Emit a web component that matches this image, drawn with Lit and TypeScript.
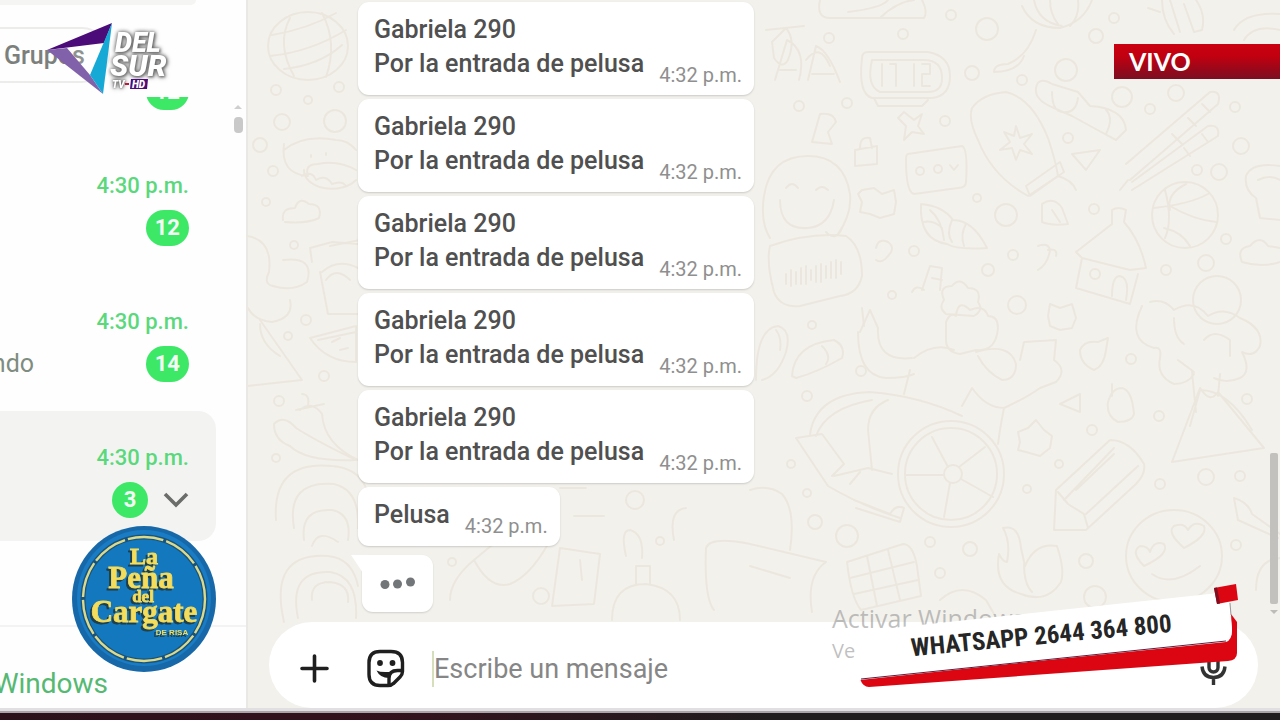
import { LitElement, html, css, svg, nothing } from "lit";
import { customElement, property } from "lit/decorators.js";

interface Message {
  lines: string[];
  time: string;
}

interface Chat {
  time: string;
  unread: number;
  preview?: string;
  selected?: boolean;
}

const MESSAGES: Message[] = [
  ...Array.from({ length: 5 }, () => ({
    lines: ["Gabriela 290", "Por la entrada de pelusa"],
    time: "4:32 p.m.",
  })),
  { lines: ["Pelusa"], time: "4:32 p.m." },
];

const CHATS: Chat[] = [
  { time: "4:30 p.m.", unread: 12 },
  { time: "4:30 p.m.", unread: 12 },
  { time: "4:30 p.m.", unread: 14, preview: "ndo" },
  { time: "4:30 p.m.", unread: 3, selected: true },
];

/* Small rings and dots scattered between the larger doodles. */
const RINGS: number[][] = [
  [276, 90, 5], [339, 87, 5], [308, 100, 4], [282, 122, 8], [260, 145, 7], [273, 171, 5], [266, 202, 4],
  [294, 245, 4], [306, 320, 5], [288, 336, 4], [324, 376, 5], [279, 401, 5], [276, 458, 4], [635, 500, 9],
  [660, 541, 4], [541, 596, 8], [452, 562, 4], [951, 15, 5], [987, 29, 11], [903, 34, 5], [829, 38, 5],
  [1114, 18, 5], [1096, 36, 7], [972, 73, 7], [1022, 80, 5], [1066, 70, 11], [1122, 97, 10], [1176, 93, 8],
  [799, 106, 5], [847, 103, 5], [945, 121, 5], [1068, 138, 5], [1150, 109, 5], [1235, 107, 5], [1241, 146, 8],
  [1197, 170, 5], [1219, 172, 8], [977, 198, 4], [1006, 215, 11], [1094, 209, 5], [914, 251, 5], [1013, 255, 5],
  [988, 270, 6], [1226, 239, 5], [1206, 263, 8], [892, 295, 4], [1166, 270, 5], [1017, 305, 9], [1217, 300, 24],
  [812, 325, 4], [861, 371, 5], [807, 396, 5], [1131, 359, 5], [1092, 430, 5], [1247, 399, 5], [1159, 416, 5],
  [791, 464, 4], [1059, 464, 4], [1027, 489, 4], [807, 493, 4], [1206, 477, 8], [1160, 484, 5], [1240, 476, 5],
  [815, 522, 7], [847, 536, 11], [930, 542, 5], [970, 549, 7], [1086, 561, 7], [1236, 545, 5], [940, 573, 5],
  [1095, 597, 11],
];

const DOODLES: string[] = [
  /* globe */
  "M268 46a40 34 0 1 0 80 0a40 34 0 1 0 -80 0M272 35q36 -6 64 -22M270 56q40 -4 76 -26M284 69q36 -4 58 -24M290 18q-14 26 4 58M322 13q16 30 4 64",
  /* baby with pacifier */
  "M284 150q20 -16 52 -10q12 0 20 10M284 144q-4 30 24 32q-4 -12 10 -12q20 -4 38 6M304 170a28 18 0 0 0 52 10M302 176q10 -6 14 4q10 -6 16 4q10 -4 14 2M324 121a11 11 0 1 1 22 0a11 11 0 1 1 -22 0M311 155v2M326 153v2",
  /* clouds at the left */
  "M283 220q-2 -12 12 -12q4 -12 14 -4q14 0 10 14q-12 6 -34 4M247 236q26 4 22 36q-6 12 4 14q20 6 34 -4q8 -26 -24 -22M290 300q4 18 -18 22q-18 -2 -24 -14M260 320l42 60l-54 6M260 324q0 20 20 32",
  /* drink */
  "M312 262l-2 -14l22 -6l26 2M320 272l8 42h30M322 272q16 -14 36 -4M330 246l30 -6M326 280q10 -14 24 0",
  /* watermelon */
  "M310 338l46 -12v36q-30 0 -46 -24zM318 340l38 -8M332 342l8 -4M340 350l8 -2",
  /* carrots */
  "M274 424q10 -10 22 4q22 14 60 32q-50 2 -66 -14q-16 -6 -16 -22zM300 410q12 -10 22 4q2 30 36 46M302 394q8 0 6 12M296 410l28 -6",
  /* spiral */
  "M276 520q-4 -60 56 -54q26 2 34 22M294 528q-8 -48 40 -44q26 6 24 44M304 540q-4 -32 28 -30q20 4 16 30M312 546q6 -18 26 -4",
  /* round face under the spiral */
  "M284 622q-16 -70 44 -66q24 2 30 30M298 618q-10 -48 32 -46q28 4 26 46M312 600q-2 -18 18 -18q20 2 18 20",
  /* bottom centre figures */
  "M450 600q0 -20 24 -40q16 30 36 24q20 -8 38 -40M474 560l24 -20M552 606l8 -58l40 6l-6 50zM580 560l2 20M612 620q0 -36 34 -36q34 4 34 36M636 584v-18h14v18M626 556q-6 -26 4 -26q14 4 12 28M560 488h26M574 516h30M674 540q-6 -30 12 -32",
  /* picture frame on the top edge */
  "M820 0q-4 18 10 18h94q4 -6 -2 -18M848 12q34 -4 40 -12M880 18q16 -16 34 -18",
  /* letters on the garland */
  "M766 30l38 -4M772 42l14 -14q10 12 2 32q-6 10 -14 -2zM775 80l12 -40q20 10 12 40M780 70h16M808 80l8 -34q12 4 24 36M812 74h22M806 60q14 -18 24 6",
  /* alarm clock */
  "M868 52h60q22 4 22 24q0 20 -18 22h-60q-14 -4 -10 -40q0 -6 6 -6zM872 60h52q18 0 18 18q0 14 -14 14h-48q-14 -6 -8 -32M882 64v22M890 64h6v22M914 64v22M922 64h8v10h-8v12h8M874 98l4 8h44l6 -6",
  /* balloon top */
  "M1022 6q10 22 38 22q24 -6 32 -28M1034 0q4 22 28 26M1050 0q0 14 8 24M1078 0q2 16 -8 26M1036 30q-8 26 -28 34q-14 0 -14 8q24 0 30 -16",
  "M1162 0q0 20 12 34M1170 0l10 32M1184 4l10 28M1196 0q10 14 6 30l-8 2M1148 8l12 4M1234 30q10 -18 46 -16M1244 40q10 -16 36 -10",
  /* mitten */
  "M972 108q10 -14 34 -16q26 6 42 46q8 24 10 38l-30 20q-36 -20 -50 -56q-10 -20 -6 -32zM1026 186l34 -24l4 10l-34 24zM1016 126l4 12l12 -4l-8 10l8 10l-12 -4l-4 10l-4 -12l-12 2l10 -8l-6 -10l10 4zM1058 176q14 4 18 14",
  /* rollerskate */
  "M1036 88q2 -12 16 -4l26 8l12 14q34 2 36 24l-10 10q-26 -14 -44 -24l-18 -8q-20 -8 -18 -20zM1052 92q0 22 14 20q10 0 12 -14M1106 110q8 8 0 24",
  /* ski pair */
  "M1126 164l84 -72q12 -2 8 12l-88 76M1132 182l76 -56q12 -2 10 10l-86 54M1120 190l8 -10M1188 118l8 8M1202 104l8 8M1172 134l10 10M1202 134l6 8M1184 148l6 8",
  /* radio card */
  "M908 154l54 -8q6 2 4 36q0 6 -8 6l-44 6q-8 -2 -8 -34q0 -6 2 -6zM916 171a4 4 0 1 0 8 0a4 4 0 1 0 -8 0M934 169a4 4 0 1 0 8 0a4 4 0 1 0 -8 0M950 165l4 5l4 -5",
  /* bag, bear, spark */
  "M855 150l22 -4v18l-22 2zM860 148q0 -12 10 -10l2 10M812 142l8 -28q14 -2 16 8l-8 10l4 12zM904 112l10 8l8 -6l-4 12l6 8l-12 -2l-8 8l2 -14l-8 -8zM1072 154l28 -4l-14 20zM862 190l12 -2l8 6l12 -4l2 12l-2 12l-14 4l-10 -4l-10 -2l2 -10l-4 -8z",
  /* big smiley */
  "M764 196q6 -40 44 -40q36 0 42 38q2 20 -12 40M764 196q-4 26 6 42M780 200q0 30 28 28q22 -2 26 -28M786 188q6 -8 12 0M816 190q6 -6 12 0M826 232q10 10 16 -4",
  /* voice note */
  "M770 246q40 -14 76 -10q16 10 16 40q-4 18 -22 20l-40 10q-20 2 -26 -14q-8 -30 -4 -46zM786 274v10M791 270v16M796 272v12M801 268v16M806 266v18M811 270v10M816 266v16M821 264v18M826 266v12M831 262v16M836 260v18M841 262v12",
  /* croissant */
  "M921 204q22 2 32 16q20 0 34 28q-30 2 -40 -4q-28 -4 -26 -40zM930 210q12 10 14 30M952 220q-6 14 0 22M966 224q-6 10 -2 22M924 222q10 -2 18 6",
  /* shells and notes */
  "M876 248q2 -10 12 -6q8 6 0 14q-6 8 -12 4M1038 246q10 -4 12 4q-2 14 -12 20M1048 250q10 -2 8 6M922 290l8 -24l12 2l-2 22M912 292q4 -8 12 -2M932 278l10 2M1042 204q12 -8 20 4l6 16q-16 2 -26 -2zM1052 210l8 12",
  /* basketball */
  "M1152 215a33 33 0 1 0 66 0a33 33 0 1 0 -66 0M1165 190q8 30 0 48M1154 208q36 -4 54 -14M1170 206q24 14 46 16M1164 228q18 4 26 18M1186 184q-20 10 -16 26",
  /* house */
  "M1076 252l36 -28v-14q6 -4 14 0l-2 12q16 18 22 46l-16 2l-48 -12zM1082 258l-6 30l54 16l8 -30M1112 296q0 -20 8 -20q10 2 6 24M1090 274a5 5 0 1 0 10 0a5 5 0 1 0 -10 0",
  /* right edge shapes */
  "M1280 166q-28 -4 -34 10q-2 14 10 22l4 20l20 2M1258 180q12 -6 22 0M1242 262q-6 -14 8 -16q10 -12 18 0l12 2M1242 262q20 6 38 0",
  /* flowers and butterfly */
  "M944 300q-6 -14 8 -14q8 -10 16 2q14 0 10 14q6 8 -4 14l-28 -2q-8 -6 -2 -14zM1050 304l10 4l12 -4l4 14l-4 10l-12 2l-10 -4l-2 -10zM862 308l2 18",
  /* tree */
  "M1142 306q-16 34 12 42q8 -2 6 10q-4 18 14 26q14 0 20 -10M1150 302q14 -4 24 8q20 -12 34 6q16 -10 32 2q24 10 20 28q-6 12 -18 6q10 20 -2 26q-14 6 -26 0M1174 318q0 20 10 26M1204 340q10 -12 26 0v16M1192 372l4 40M1220 374l-2 22M1172 462l28 -74q10 16 18 4l46 56zM1190 426l10 -36q28 0 52 40M1178 360l16 12",
  /* slipper, avocado */
  "M756 380q0 -52 22 -54q14 4 8 26q-8 24 -24 28M776 330q6 8 4 20M792 376q2 -32 42 -36q12 6 8 18q-24 14 -46 20zM822 346q10 10 4 18",
  /* seated figure and wheelchair */
  "M860 332l10 -22l8 18q-2 34 34 30M858 332q0 44 28 46q20 0 28 -4M946 340v-18q4 -10 10 -6q2 -18 14 -6q14 -6 18 6q10 0 10 12q-2 24 -22 22l-16 4q-14 -2 -14 -14zM914 358q20 -16 40 -8M976 352q34 -10 40 12q0 16 -14 16q-16 -8 -24 -24M1020 360l4 -18l32 -2l-2 20q14 10 2 22l-16 6q-14 10 -36 20q-18 0 -32 -20l-10 18M910 370l-6 24M1004 408q-4 20 -6 36",
  "M898 474a53 53 0 1 0 106 0a53 53 0 1 0 -106 0M905 474a46 46 0 1 0 92 0a46 46 0 1 0 -92 0M944 474a9 9 0 1 0 18 0a9 9 0 1 0 -18 0M906 475h38M948 467l-16 -30M959 467l26 -20M961 479l32 18M950 483l-6 34",
  "M810 434q6 -40 60 -42q50 4 92 24M816 436q10 -28 56 -36M872 470l-4 -40q0 -22 20 -30M796 438l32 48q34 20 72 32M796 438l26 -4l22 30l-12 12M834 476l34 -8l24 6M854 500l36 14q6 -10 14 -6l-4 14l-44 -14M850 484l10 -12",
  /* chocolate bar */
  "M847 562l56 -18q10 0 14 22l4 30l-60 14q-10 -12 -14 -48zM867 556l10 50M888 550l12 50M850 578l64 -16M854 594l64 -14",
  /* flame */
  "M1003 528q16 -4 18 20l4 18q10 -24 32 -20q8 24 4 36q-14 22 -40 12q-28 -8 -22 -40q4 8 8 8q4 -20 -4 -34zM1024 564q0 20 8 28",
  /* pencil */
  "M1054 530l2 -40l54 -50q20 0 34 24q2 10 -8 20l-50 46zM1064 500l50 -52M1086 514l52 -48M1058 492l10 12l16 10l4 14M1076 490l38 -36",
  /* small objects */
  "M1080 350q4 -10 18 -8l10 -4l-2 12q-2 16 -12 20q-14 -6 -14 -20zM1108 402q4 -14 14 -14q10 2 12 26q-2 8 -16 8q-12 -6 -10 -20zM1112 384v12M1060 404l20 -10v18zM1018 432l10 -4l8 -8l8 10l8 6l-2 12l-10 8l-14 -4l-8 -2l2 -8zM1234 498q14 4 18 16q14 10 28 20M1234 498l4 22l40 18",
  /* heart-eyed smiley */
  "M1126 556a48 46 0 1 1 96 0a48 46 0 1 1 -96 0M1144 566q-14 -14 -4 -20q8 0 10 6q4 -12 14 -8q6 10 -20 22M1184 548q-18 -16 -10 -22q10 -4 14 4q6 -10 16 -4q4 10 -20 22M1152 574q20 14 48 -8",
  /* cake and creatures on the bottom */
  "M750 490q18 -6 32 4q14 16 8 56M750 544l76 18q-20 14 -14 50M750 566l40 12M706 548q4 -12 44 -4M706 548q-2 50 8 62M940 600q22 -20 46 0l8 14M1256 590q0 -30 24 -32",
];

@customElement("chat-wallpaper")
export class ChatWallpaper extends LitElement {
  static styles = css`
    :host { display: block; }
    .art { display: block; width: 100%; height: 100%; }
  `;

  render() {
    return html`
      <svg class="art" viewBox="246 0 1034 720" preserveAspectRatio="xMinYMin slice" aria-hidden="true">
        <g fill="none" stroke="#ece7de" stroke-width="2" stroke-linejoin="round" stroke-linecap="round">
          ${DOODLES.map((d) => svg`<path d=${d} />`)}
          ${RINGS.map(([x, y, r]) => svg`<circle cx=${x} cy=${y} r=${r} />`)}
        </g>
      </svg>
    `;
  }
}

@customElement("message-bubble")
export class MessageBubble extends LitElement {
  @property({ attribute: false }) message!: Message;

  static styles = css`
    :host {
      display: flex;
      align-items: flex-end;
      gap: 15px;
      padding: 11px 12px 8px 16px;
      border-radius: 11px;
      background: #fff;
      box-shadow: 0 1px 2px rgba(0, 0, 0, 0.16);
      color: #505050;
    }
    .text { margin: 0 0 6px; font-size: 25px; font-weight: 500; line-height: 34px; white-space: nowrap; }
    .line { display: block; }
    .time { color: #8f8f8f; font-size: 20px; line-height: 24px; white-space: nowrap; }
  `;

  render() {
    return html`
      <p class="text">${this.message.lines.map((l) => html`<span class="line">${l}</span>`)}</p>
      <time class="time">${this.message.time}</time>
    `;
  }
}

@customElement("chat-sidebar")
export class ChatSidebar extends LitElement {
  static styles = css`
    :host {
      display: flex;
      flex-direction: column;
      box-sizing: border-box;
      border-right: 2px solid #e9e8e4;
      background: #fefefe;
      overflow: hidden;
    }
    .search { height: 5px; margin-right: 50px; border-radius: 0 0 12px 0; background: #f5f5f4; }
    .filters { display: flex; padding: 22px 0 14px; }
    .chip {
      box-sizing: border-box;
      height: 56px;
      width: 110px;
      padding: 0 0 0 4px;
      border: 2px solid #ececeb;
      border-left: 0;
      border-radius: 0 28px 28px 0;
      background: none;
      color: #7c807c;
      font: 500 25px Roboto, sans-serif;
      text-align: left;
    }
    .scroller { display: flex; flex: 1; min-height: 0; overflow: hidden; }
    .list { flex: 1; margin: -94px 0 0; padding: 0; list-style: none; }
    .row {
      display: flex;
      flex-direction: column;
      gap: 11px;
      box-sizing: border-box;
      height: 130px;
      margin: 0 2px 6px 0;
      padding: 34px 27px 0 0;
      border-radius: 0 18px 18px 0;
    }
    .selected { background: #f3f4f1; }
    .time { color: #5ad87c; font-size: 22px; font-weight: 500; line-height: 26px; text-align: right; }
    .meta { display: flex; align-items: center; justify-content: space-between; }
    .preview { display: flex; justify-content: flex-end; width: 34px; overflow: hidden; color: #7f8c80; font-size: 25px; line-height: 34px; }
    .status { display: flex; align-items: center; gap: 15px; }
    .badge {
      box-sizing: border-box;
      min-width: 36px;
      padding: 0 9px;
      border-radius: 18px;
      background: #3de866;
      color: #f4fff6;
      font-size: 22px;
      font-weight: 700;
      line-height: 36px;
      text-align: center;
    }
    .chevron { display: block; width: 26px; height: 18px; }
    .rail { display: flex; flex-direction: column; align-items: center; width: 12px; margin: 0 2px 0 14px; padding-top: 8px; gap: 8px; }
    .up { width: 8px; height: 4px; background: #cfcfcf; clip-path: polygon(50% 0, 100% 100%, 0 100%); }
    .thumb { width: 9px; height: 16px; border-radius: 4px; background: #c9c9c9; }
    .footer { padding: 38px 0 6px; border-top: 2px solid #f3f3f3; }
    .link {
      display: flex;
      justify-content: flex-end;
      width: 108px;
      overflow: hidden;
      color: #55b973;
      font-size: 28px;
      line-height: 37px;
      text-decoration: none;
    }
  `;

  render() {
    return html`
      <div class="search"></div>
      <div class="filters"><button class="chip" type="button">Grupos</button></div>
      <div class="scroller">
        <ul class="list">
          ${CHATS.map(
            (c) => html`
              <li class="row ${c.selected ? "selected" : ""}">
                <time class="time">${c.time}</time>
                <div class="meta">
                  <span class="preview">${c.preview ?? nothing}</span>
                  <span class="status">
                    <span class="badge">${c.unread}</span>
                    ${c.selected
                      ? html`<svg class="chevron" viewBox="0 0 26 18" fill="none" stroke="#6a6d6a" stroke-width="3.6">
                          <path d="M2 3l11 11L24 3" />
                        </svg>`
                      : nothing}
                  </span>
                </div>
              </li>
            `,
          )}
        </ul>
        <div class="rail"><span class="up"></span><span class="thumb"></span></div>
      </div>
      <div class="footer"><a class="link" href="#">Windows</a></div>
    `;
  }
}

@customElement("message-composer")
export class MessageComposer extends LitElement {
  static styles = css`
    :host {
      display: flex;
      align-items: center;
      box-sizing: border-box;
      height: 86px;
      padding: 8px 24px 0 26px;
      border-radius: 43px;
      background: #fff;
    }
    .tool { display: grid; place-items: center; width: 40px; height: 40px; padding: 0; border: 0; background: none; }
    .plus { margin-right: 31px; }
    .icon { display: block; width: 40px; height: 40px; }
    .field {
      flex: 1;
      min-width: 0;
      height: 36px;
      margin-left: 26px;
      padding: 0;
      border: 0;
      border-left: 2px solid #d5dfbc;
      outline: 0;
      background: none;
      color: #434343;
      font: 27px Roboto, sans-serif;
    }
    .field::placeholder { color: #868686; opacity: 1; }
  `;

  render() {
    return html`
      <button class="tool plus" type="button" aria-label="Adjuntar">
        <svg class="icon" viewBox="0 0 40 40" stroke="#1f1f1f" stroke-width="3.6" stroke-linecap="round">
          <path d="M7 19.500h25M19.500 7v25" />
        </svg>
      </button>
      <button class="tool" type="button" aria-label="Emojis">
        <svg class="icon" viewBox="0 0 40 40" fill="none" stroke="#1f1f1f" stroke-width="3.400" stroke-linejoin="round">
          <path d="M14 2.500h11q11.500 0 11.500 11v9q0 3-2.500 5.500l-6 6q-2.500 2.500-6 2.500h-8q-11 0-11-11v-12q0-11 11-11z" />
          <path d="M36 21.500h-4.500q-8.500 0-8.500 8v6.500" />
          <circle cx="14" cy="14" r="2.900" fill="#1f1f1f" stroke="none" />
          <circle cx="26.500" cy="14" r="2.900" fill="#1f1f1f" stroke="none" />
          <path d="M10.500 21.500q5 2.500 16.500 1q-3.500 2.500-4 6.500q-9 0-12.500-7.500z" fill="#1f1f1f" stroke="none" />
        </svg>
      </button>
      <input class="field" type="text" placeholder="Escribe un mensaje" aria-label="Escribe un mensaje" />
      <button class="tool" type="button" aria-label="Mensaje de voz">
        <svg class="icon" viewBox="0 0 40 40" fill="none" stroke="#333" stroke-width="3.400">
          <rect x="15" y="4" width="9" height="19" rx="4.500" />
          <path d="M8 17.500q1 11 11.500 11t11.500-11M19.500 28.500V36" />
        </svg>
      </button>
    `;
  }
}

@customElement("channel-logo")
export class ChannelLogo extends LitElement {
  static styles = css`
    :host { display: block; }
    .mark { display: block; width: 128px; height: 76px; }
    .name { font: italic 900 27px Roboto, sans-serif; fill: #fff; filter: drop-shadow(0 0 2px #666) drop-shadow(1px 1px 1px #777); }
    .wide { font-size: 30px; }
    .small { font: italic 900 10px Roboto, sans-serif; fill: #fff; }
    .halo { filter: drop-shadow(0 0 1px #555) drop-shadow(0 0 2px #666); }
  `;

  render() {
    return html`
      <svg class="mark" viewBox="46 22 128 76" role="img" aria-label="Del Sur TV HD">
        <path d="M67 48l36-5-14 32z" fill="#fff" fill-opacity=".15" />
        <path d="M47 50l20-2 23 27 13 19z" fill="#8261ab" />
        <path d="M47 50L112 23l-8 20z" fill="#4b0b78" />
        <path d="M112 23l-9 71-13-19z" fill="#17a9d6" />
        <text class="name" x="115" y="52">DEL</text>
        <text class="name wide" x="110" y="76">SUR</text>
        <text class="small halo" x="112" y="88">TV</text>
        <path d="M125 83h4v2h-4z" fill="#c01535" />
        <path d="M131 79h17l-1 10h-17z" fill="#4b0b78" />
        <text class="small" x="132" y="88">HD</text>
      </svg>
    `;
  }
}

@customElement("show-badge")
export class ShowBadge extends LitElement {
  static styles = css`
    :host { display: block; }
    .disc { display: block; width: 144px; height: 146px; }
    .word { font-family: "Liberation Serif", serif; font-weight: 700; fill: #f4dc5c; stroke: #f4dc5c; stroke-width: 0.8; text-anchor: middle; filter: drop-shadow(-2px 2px 0 #1d3f4c); }
    .risa { font-family: "Liberation Sans", sans-serif; font-size: 8px; stroke-width: 0; }
    .del { font-size: 17px; }
    .la { font-size: 24px; }
    .big { font-size: 31px; }
  `;

  render() {
    return html`
      <svg class="disc" viewBox="0 0 144 146" role="img" aria-label="La Peña del Cargate de Risa">
        <ellipse cx="72" cy="73" rx="72" ry="73" fill="#1768a8" />
        <ellipse cx="72" cy="72" rx="67" ry="68" fill="#1a7cc4" />
        <ellipse cx="72" cy="73" rx="61" ry="62" fill="#1478bf" stroke="#17537c" stroke-width="5" />
        <ellipse cx="72" cy="73" rx="61" ry="62" fill="none" stroke="#dcd98a" stroke-width="2.400" stroke-dasharray="36 3" />
        <text class="word la" x="72" y="38">La</text>
        <text class="word big" x="69" y="62">Peña</text>
        <text class="word del" x="71" y="76">del</text>
        <text class="word big" x="72" y="96">Cargate</text>
        <text class="word risa" x="100" y="109">DE RISA</text>
      </svg>
    `;
  }
}

@customElement("contact-banner")
export class ContactBanner extends LitElement {
  static styles = css`
    :host { display: block; }
    .plate { display: block; width: 388px; height: 108px; }
    .phone { font: 700 25px "Roboto Condensed", Roboto, sans-serif; fill: #262626; text-anchor: middle; }
  `;

  render() {
    return html`
      <svg class="plate" viewBox="852 582 388 108">
        <path d="M860 679L1226 642q6-2 6-12l-1-16 6 8v31q0 7-9 8L869 687q-6 0-9-8z" fill="#dc0612" />
        <path d="M855 632L1228 592l4 37q0 11-8 12L860 680z" fill="#fff" />
        <path d="M861 679L1226 641" stroke="#5c1d3c" stroke-width="1" />
        <path d="M1214 588l22-4 2 16-21 4z" fill="#dc0612" />
        <path d="M1214 588l3-.500 3 16-3 .500z" fill="#7d1020" />
        <path d="M1230 603l1 12" stroke="#999" stroke-width="1" />
        <text class="phone" transform="rotate(-5.400 1042 644)" x="1042" y="644">WHATSAPP 2644 364 800</text>
      </svg>
    `;
  }
}

@customElement("app-root")
export class AppRoot extends LitElement {
  static styles = css`
    :host {
      position: relative;
      display: flex;
      flex-direction: column;
      height: 100vh;
      overflow: hidden;
      font-family: Roboto, sans-serif;
    }
    .window { display: grid; grid-template-columns: 248px minmax(0, 1fr); flex: 1; min-height: 0; }
    .chat { position: relative; display: flex; flex-direction: column; min-width: 0; min-height: 0; background: #f2f1ec; }
    .wallpaper { position: absolute; inset: 0 0 0 -2px; }
    .history { position: relative; display: flex; flex: 1; min-height: 0; justify-content: space-between; }
    .messages {
      display: flex;
      flex-direction: column;
      justify-content: flex-end;
      align-items: flex-start;
      gap: 4px;
      padding: 0 0 10px 110px;
    }
    .typing {
      position: relative;
      display: flex;
      align-items: center;
      justify-content: center;
      width: 71px;
      height: 57px;
      margin: 5px 0 0 4px;
      border-radius: 11px;
      background: #fff;
      box-shadow: 0 1px 2px rgba(0, 0, 0, 0.14);
    }
    .tail { position: absolute; top: 0; left: -11px; width: 24px; height: 20px; background: #fff; clip-path: polygon(0 0, 100% 0, 100% 100%, 50% 90%); }
    .dots { display: block; width: 36px; height: 14px; }
    .rail { display: flex; flex-direction: column; justify-content: flex-end; align-items: center; gap: 6px; width: 8px; padding: 0 2px 8px 0; }
    .thumb { width: 8px; height: 151px; border-radius: 2px; background: #c2c1bd; }
    .down { width: 8px; height: 4px; background: #bdbcb8; clip-path: polygon(0 0, 100% 0, 50% 100%); }
    .composer { position: relative; margin: 0 22px 0 21px; }
    .taskbar { height: 6px; padding-top: 3px; border-top: 3px solid #e2dfe2; background: linear-gradient(90deg, #2c111a, #33111d 30%, #211c1e 60%, #211c1e); box-shadow: inset 0 2px 0 #aaa4a8; }
    .watermark { position: absolute; right: 254px; bottom: 53px; width: 194px; margin: 0; color: rgba(150, 150, 150, 0.6); font-family: "Open Sans", sans-serif; }
    .title { display: block; font-size: 25px; line-height: 34px; white-space: nowrap; }
    .hint { display: block; font-size: 20px; line-height: 32px; }
    .logo { position: absolute; top: 22px; left: 46px; }
    .show { position: absolute; left: 72px; bottom: 48px; }
    .banner { position: absolute; right: 40px; bottom: 30px; }
    .live {
      position: absolute;
      top: 44px;
      right: 0;
      box-sizing: border-box;
      width: 166px;
      padding-left: 15px;
      background: linear-gradient(#cb0010, #c1000f 35%, #7c0e22);
      color: #fff;
      font: 700 25px/35px Lato, sans-serif;
    }
  `;

  render() {
    return html`
      <div class="window">
        <chat-sidebar></chat-sidebar>
        <main class="chat">
          <chat-wallpaper class="wallpaper"></chat-wallpaper>
          <div class="history">
            <div class="messages">
              ${MESSAGES.map((m) => html`<message-bubble .message=${m}></message-bubble>`)}
              <div class="typing" aria-label="Escribiendo">
                <span class="tail"></span>
                <svg class="dots" viewBox="0 0 36 14" fill="#727678">
                  <circle cx="5" cy="7.500" r="4.500" />
                  <circle cx="17.500" cy="7" r="4.500" />
                  <circle cx="30.500" cy="5" r="4.500" />
                </svg>
              </div>
            </div>
            <div class="rail"><span class="thumb"></span><span class="down"></span></div>
          </div>
          <message-composer class="composer"></message-composer>
        </main>
      </div>
      <div class="taskbar"></div>
      <p class="watermark"><span class="title">Activar Windows</span><span class="hint">Ve</span></p>
      <channel-logo class="logo"></channel-logo>
      <show-badge class="show"></show-badge>
      <div class="live">VIVO</div>
      <contact-banner class="banner"></contact-banner>
    `;
  }
}
